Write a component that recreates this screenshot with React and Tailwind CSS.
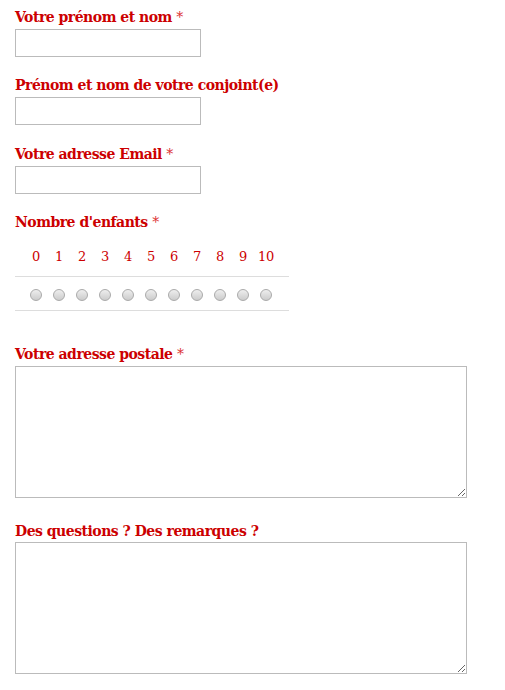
import { useState } from 'react';

const labelCls = "block text-[14px] leading-[18px] font-bold tracking-[-0.5px] text-[#c00]";

function Req() {
    return <span className="font-normal tracking-normal text-[#d33]"> *</span>;
}

function Field({ label, required, mt }) {
    return (
        <div className={mt}>
            <label className={labelCls}>
                {label}
                {required && <Req />}
            </label>
            <input
                type="text"
                className="block mt-[3px] w-[186px] h-[28px] border border-[#bbb] bg-white px-1 outline-none"
            />
        </div>
    );
}

export default function App() {
    const [kids, setKids] = useState(null);
    const counts = [0, 1, 2, 3, 4, 5, 6, 7, 8, 9, 10];

    return (
        <div className="pl-[15px] pt-[8px] pb-4 bg-white min-h-[690px]" style={{ fontFamily: '"DejaVu Serif", serif' }}>
            <Field label="Votre prénom et nom" required />
            <Field label="Prénom et nom de votre conjoint(e)" mt="mt-[19px]" />
            <Field label="Votre adresse Email" required mt="mt-[20px]" />

            {/* Nombre d'enfants */}
            <div className="mt-[19px]">
                <label className={labelCls}>
                    Nombre d'enfants
                    <Req />
                </label>
                <div className="mt-[5px] w-[274px]">
                    <div className="h-[40px] flex items-center justify-center pr-[2px] pt-[1px]">
                        {counts.map((n) => (
                            <div key={n} className="w-[23px] text-center text-[13px] leading-[16px] tracking-[-0.3px] text-[#c00]">
                                {n}
                            </div>
                        ))}
                    </div>
                    <div className="h-[35px] border-t border-b border-[#ddd] flex items-center justify-center pt-[2px] pr-[2px]">
                        {counts.map((n) => (
                            <div key={n} className="w-[23px] flex justify-center">
                                <button
                                    type="button"
                                    onClick={() => setKids(n)}
                                    className="w-[12px] h-[12px] rounded-full border border-[#aaa] bg-gradient-to-b from-[#eee] to-[#ccc] flex items-center justify-center"
                                >
                                    {kids === n && <span className="w-[6px] h-[6px] rounded-full bg-[#c00]" />}
                                </button>
                            </div>
                        ))}
                    </div>
                </div>
            </div>

            <div className="mt-[34px]">
                <label className={labelCls}>
                    Votre adresse postale
                    <Req />
                </label>
                <textarea className="block mt-[3px] w-[452px] h-[132px] border border-[#bbb] bg-white outline-none resize" />
            </div>

            <div className="mt-[24px]">
                <label className={labelCls}>Des questions ? Des remarques ?</label>
                <textarea className="block mt-[2px] w-[452px] h-[132px] border border-[#bbb] bg-white outline-none resize" />
            </div>
        </div>
    );
}
